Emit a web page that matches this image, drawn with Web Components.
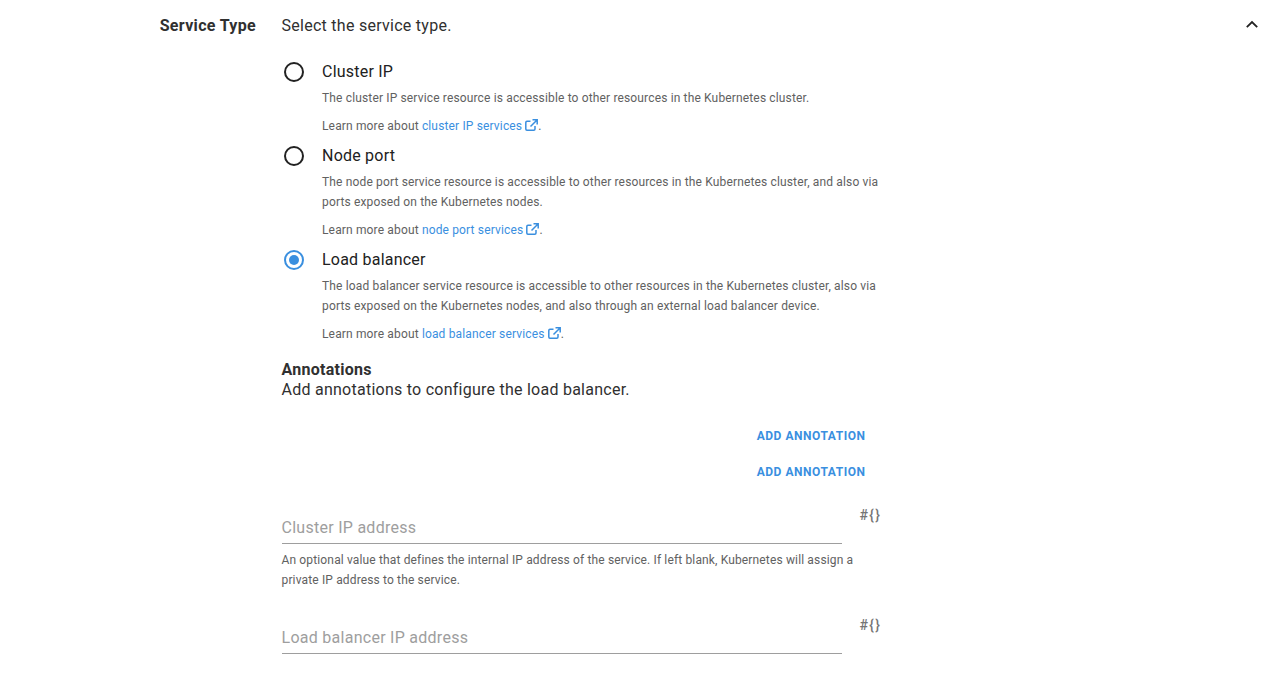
<!DOCTYPE html>
<html>
<head>
<meta charset="utf-8">
<style>
  html, body { margin: 0; height: 676px; overflow: hidden; background: #fff; }
  body { font-family: Roboto, "Liberation Sans", sans-serif; color: #303030; }
</style>
</head>
<body>
<service-section heading="Service Type" intro="Select the service type.">
  <service-option label="Cluster IP" service="cluster IP services">
    The cluster IP service resource is accessible to other resources in the Kubernetes cluster.
  </service-option>
  <service-option label="Node port" service="node port services">
    The node port service resource is accessible to other resources in the Kubernetes cluster, and also via ports exposed on the Kubernetes nodes.
  </service-option>
  <service-option label="Load balancer" service="load balancer services" checked>
    The load balancer service resource is accessible to other resources in the Kubernetes cluster, also via ports exposed on the Kubernetes nodes, and also through an external load balancer device.
  </service-option>
  <annotation-block></annotation-block>
  <ip-field placeholder="Cluster IP address" hint="An optional value that defines the internal IP address of the service. If left blank, Kubernetes will assign a private IP address to the service."></ip-field>
  <ip-field placeholder="Load balancer IP address"></ip-field>
</service-section>

<script>
class ServiceSection extends HTMLElement {
  connectedCallback() {
    const root = this.attachShadow({ mode: 'open' });
    root.innerHTML = `
      <style>
        :host { display: grid; grid-template-columns: 256px 600px 1fr; box-sizing: border-box; padding-top: 16px; width: 1280px; }
        h2 { margin: 0; font-size: 16px; font-weight: 700; line-height: 19px; text-align: right; color: #303030; letter-spacing: .33px; }
        .col { padding-left: 25.5px; width: 600px; }
        .intro { font-size: 16px; line-height: 19px; letter-spacing: .27px; color: #303030; margin-bottom: 27px; }
        .toggle { justify-self: end; margin-right: 20px; height: 19px; }
        svg { display: block; }
      </style>
      <h2>${this.getAttribute('heading')}</h2>
      <div class="col">
        <div class="intro">${this.getAttribute('intro')}</div>
        <slot></slot>
      </div>
      <div class="toggle">
        <svg width="16" height="16" viewBox="0 0 16 16" fill="none"><path d="M2.800 11.200 8 6l5.200 5.200" stroke="#222" stroke-width="1.8"/></svg>
      </div>`;
  }
}

class ServiceOption extends HTMLElement {
  connectedCallback() {
    const root = this.attachShadow({ mode: 'open' });
    const on = this.hasAttribute('checked');
    const mark = on
      ? '<circle cx="10" cy="10" r="9" fill="none" stroke="#3a8fdf" stroke-width="2"/><circle cx="10" cy="10" r="5" fill="#3a8fdf"/>'
      : '<circle cx="10" cy="10" r="9" fill="none" stroke="#222" stroke-width="2"/>';
    root.innerHTML = `
      <style>
        :host { display: flex; font-size: 12px; margin-bottom: 10px; }
        .radio { width: 40.5px; flex: none; padding: 0 0 0 2px; box-sizing: border-box; }
        svg { display: block; }
        .label { font-size: 16px; line-height: 19px; color: #212121; letter-spacing: .22px; margin: 0 0 7px; }
        .text { line-height: 20px; color: #616161; width: 560px; letter-spacing: .15px; }
        .more { line-height: 20px; color: #616161; margin-top: 8px; letter-spacing: .15px; }
        a { color: #3a8fdf; text-decoration: none; }
        a svg { display: inline-block; vertical-align: -1px; }
      </style>
      <div class="radio"><svg width="20" height="20" viewBox="0 0 20 20">${mark}</svg></div>
      <div>
        <div class="label">${this.getAttribute('label')}</div>
        <div class="text"><slot></slot></div>
        <div class="more">Learn more about <a href="#">${this.getAttribute('service')}
          <svg width="13" height="12" viewBox="0 0 13 12" fill="none" stroke="#3a8fdf" stroke-width="1.5"><path d="M10 7v3a1.200 1.200 0 0 1-1.200 1.200H2A1.200 1.200 0 0 1 .8 10V3.500A1.200 1.200 0 0 1 2 2.300h3.500"/><path d="M7.500.8h4.700v4.700M12 1 5.500 7.500"/></svg></a>.</div>
      </div>`;
  }
}

class AnnotationBlock extends HTMLElement {
  connectedCallback() {
    const root = this.attachShadow({ mode: 'open' });
    root.innerHTML = `
      <style>
        :host { display: block; padding-top: 6px; }
        h3 { margin: 0; font-size: 16px; line-height: 20px; font-weight: 700; color: #303030; letter-spacing: .27px; }
        p { margin: 0; font-size: 16px; line-height: 20px; letter-spacing: .25px; color: #303030; }
        .actions { display: flex; flex-direction: column; align-items: flex-end; gap: 16px; padding: 26px 0 0 0; margin-bottom: -1px; width: 584px; box-sizing: border-box; }
        button { border: 0; background: none; padding: 0; font: 700 12px/20px Roboto, sans-serif; color: #3a8fdf; text-transform: uppercase; letter-spacing: .53px; }
      </style>
      <h3>Annotations</h3>
      <p>Add annotations to configure the load balancer.</p>
      <div class="actions">
        <button>Add annotation</button>
        <button>Add annotation</button>
      </div>`;
  }
}

class IpField extends HTMLElement {
  connectedCallback() {
    const root = this.attachShadow({ mode: 'open' });
    const hint = this.getAttribute('hint');
    root.innerHTML = `
      <style>
        :host { display: block; padding-top: 24px; width: 600px; }
        .row { display: flex; align-items: flex-start; gap: 18px; }
        .field { width: 560px; height: 39px; box-sizing: border-box; border-bottom: 1px solid #9e9e9e; padding-top: 13px; font-size: 16px; line-height: 19px; color: #9e9e9e; letter-spacing: .27px; }
        .tpl { font-size: 14px; line-height: 16px; font-weight: 500; color: #757575; margin-top: 2px; white-space: nowrap; letter-spacing: 1.3px; }
        .hint { font-size: 12px; line-height: 20px; color: #616161; letter-spacing: .145px; margin: 6px 0 1px; width: 575px; }
      </style>
      <div class="row"><div class="field">${this.getAttribute('placeholder')}</div><div class="tpl">#{}</div></div>
      ${hint ? `<div class="hint">${hint}</div>` : ''}`;
  }
}

customElements.define('service-section', ServiceSection);
customElements.define('service-option', ServiceOption);
customElements.define('annotation-block', AnnotationBlock);
customElements.define('ip-field', IpField);
</script>
</body>
</html>
